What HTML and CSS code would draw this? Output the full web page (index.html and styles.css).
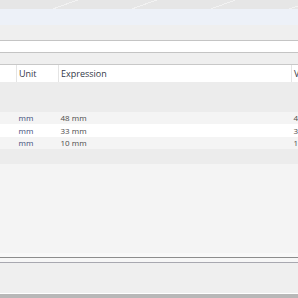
FILE: index.html
```html
<!DOCTYPE html>
<html lang="en">
<head>
    <meta charset="UTF-8">
    <meta name="viewport" content="width=device-width, initial-scale=1.0">
    <title>Parameters</title>
    <link rel="stylesheet" href="styles.css">
</head>
<body>
    <div class="titlebar"></div>
    <div class="header-band"></div>
    <div class="toolbar"></div>
    <div class="search-field"></div>
    <div class="filter-bar"></div>

    <table class="param-table">
        <thead>
            <tr>
                <th class="col-name"></th>
                <th class="col-unit">Unit</th>
                <th class="col-expr">Expression</th>
                <th class="col-value">Value</th>
            </tr>
        </thead>
        <tbody>
            <tr class="group"><td colspan="4"></td></tr>
            <tr class="row-odd">
                <td></td>
                <td class="unit">mm</td>
                <td>48 mm</td>
                <td>48 mm</td>
            </tr>
            <tr class="row-even">
                <td></td>
                <td class="unit">mm</td>
                <td>33 mm</td>
                <td>33 mm</td>
            </tr>
            <tr class="row-odd">
                <td></td>
                <td class="unit">mm</td>
                <td>10 mm</td>
                <td>10 mm</td>
            </tr>
            <tr class="group-end"><td colspan="4"></td></tr>
        </tbody>
    </table>

    <div class="empty-area"></div>
    <div class="splitter"></div>
    <div class="footer"></div>
    <div class="desk"></div>
</body>
</html>
```

FILE: styles.css
```css
body {
    font-family: "Open Sans", "Noto Sans", sans-serif;
    margin: 0;
    width: 298px;
    height: 298px;
    overflow: hidden;
    display: flex;
    flex-direction: column;
    background-color: #f4f4f4;
}

.titlebar {
    height: 9px;
    background-color: #e6e6e6;
    background-image: repeating-linear-gradient(160deg, transparent 0 26px, #f2f2f2 26px 27px);
}

.header-band {
    height: 16px;
    background-color: #edf1f8;
}

.toolbar {
    height: 15px;
    background-color: #efefef;
    border-bottom: 1px solid #c4c4c4;
}

.search-field {
    height: 11px;
    background-color: #fff;
    border-bottom: 1px solid #c4c4c4;
}

.filter-bar {
    height: 11px;
    background-color: #efefef;
    border-bottom: 1px solid #c8c8c8;
}

.param-table {
    width: 100%;
    border-collapse: collapse;
    table-layout: fixed;
}

.param-table th {
    height: 16px;
    padding: 1px 0 0 2px;
    line-height: 16px;
    background-color: #fff;
    border-left: 1px solid #e4e4e4;
    font-size: 9px;
    font-weight: normal;
    color: #333848;
    text-align: left;
    white-space: nowrap;
    overflow: hidden;
}

.param-table th:first-child {
    border-left: none;
}

.col-name { width: 14px; }
.col-unit { width: 39px; }
.col-expr { width: 230px; }

.param-table td {
    height: 12px;
    padding: 0 0 0 2px;
    line-height: 12px;
    font-size: 8px;
    color: #4a4a4a;
    white-space: nowrap;
    overflow: hidden;
}

.param-table td.unit {
    color: #3b4a78;
}

.group td {
    height: 30px;
    padding: 0;
    background-color: #ececec;
}

.group-end td {
    height: 15px;
    padding: 0;
    background-color: #ececec;
}

.row-odd { background-color: #f4f4f4; }
.row-even td { background-color: #fff; height: 13px; }
.row-odd td { background-color: #f4f4f4; }

.empty-area {
    flex: 1;
    background-color: #f4f4f4;
    border-bottom: 4px solid #f8f8f8;
}

.splitter {
    height: 4px;
    background-color: #f6f6f6;
    border-top: 1px solid #8c8c8c;
    border-bottom: 1px solid #a8a8b0;
}

.footer {
    height: 30px;
    background-color: #efefef;
    border-bottom: 1px solid #fff;
}

.desk {
    height: 4px;
    background-color: #b8b8b8;
}
```
